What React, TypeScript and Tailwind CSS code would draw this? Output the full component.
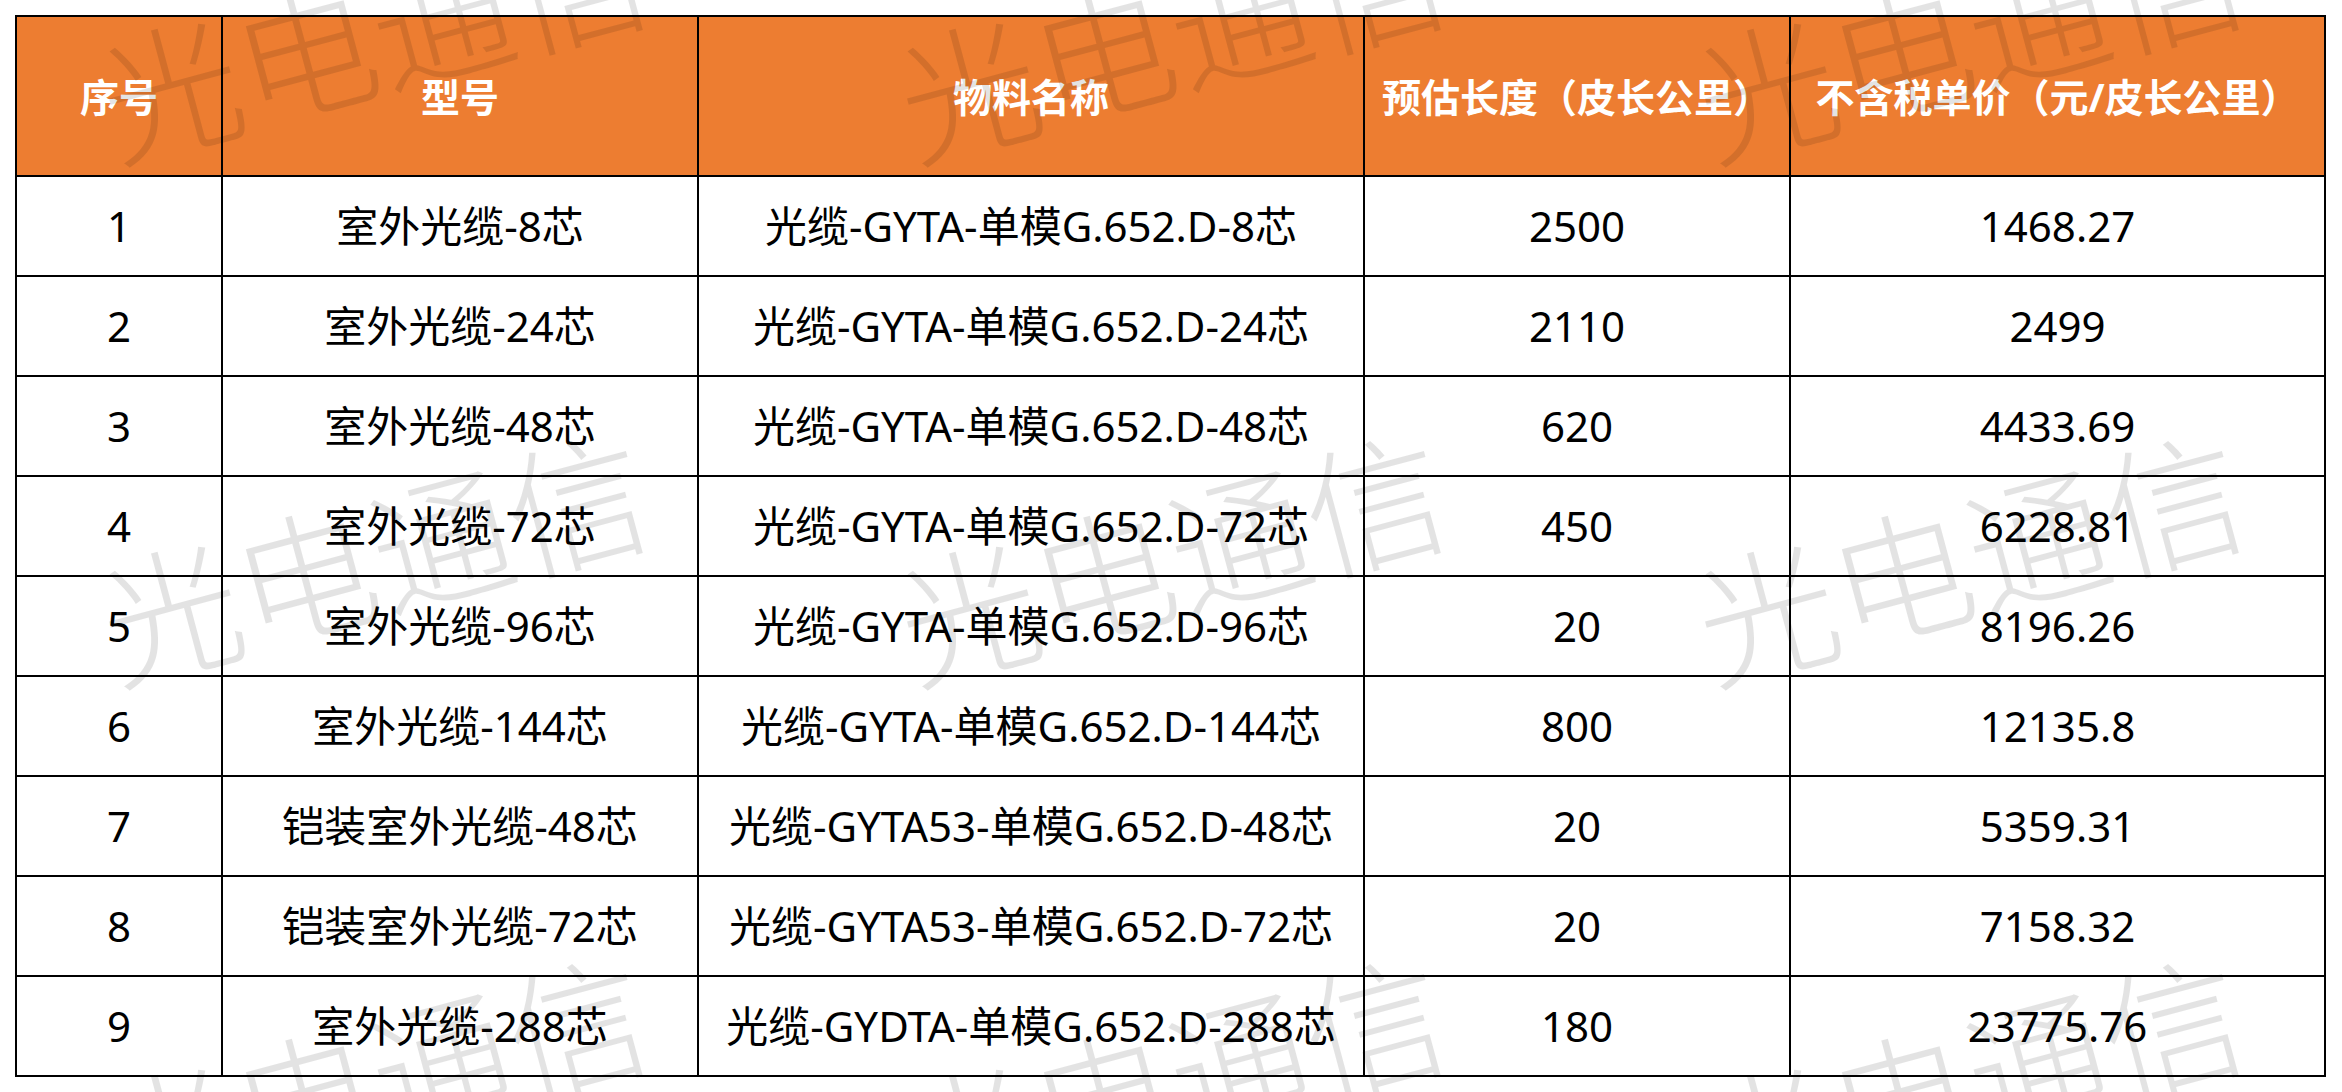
import React from "react";

const rows: [string, string, string, string, string][] = [
  ["1", "室外光缆-8芯", "光缆-GYTA-单模G.652.D-8芯", "2500", "1468.27"],
  ["2", "室外光缆-24芯", "光缆-GYTA-单模G.652.D-24芯", "2110", "2499"],
  ["3", "室外光缆-48芯", "光缆-GYTA-单模G.652.D-48芯", "620", "4433.69"],
  ["4", "室外光缆-72芯", "光缆-GYTA-单模G.652.D-72芯", "450", "6228.81"],
  ["5", "室外光缆-96芯", "光缆-GYTA-单模G.652.D-96芯", "20", "8196.26"],
  ["6", "室外光缆-144芯", "光缆-GYTA-单模G.652.D-144芯", "800", "12135.8"],
  ["7", "铠装室外光缆-48芯", "光缆-GYTA53-单模G.652.D-48芯", "20", "5359.31"],
  ["8", "铠装室外光缆-72芯", "光缆-GYTA53-单模G.652.D-72芯", "20", "7158.32"],
  ["9", "室外光缆-288芯", "光缆-GYDTA-单模G.652.D-288芯", "180", "23775.76"],
];

const headers = ["序号", "型号", "物料名称", "预估长度（皮长公里）", "不含税单价（元/皮长公里）"];

const marks: { x: number; y: number }[] = [];
for (const y of [29, 552, 1075]) {
  for (const x of [372, 1170, 1968]) {
    marks.push({ x, y });
  }
}

export default function App() {
  return (
    <div className="relative w-[2342px] h-[1092px] overflow-hidden bg-white font-['Noto_Sans','Noto_Sans_CJK_SC',sans-serif]">
      <div className="p-[15px]">
        <div className="grid w-fit grid-cols-[204px_474px_664px_424px_533px] grid-rows-[158px_repeat(9,98px)] gap-[2px] bg-black p-[2px]">
          {headers.map((h) => (
            <div
              key={h}
              className="flex items-center justify-center bg-[#ED7D31] text-[39px] font-bold leading-none text-white whitespace-nowrap"
            >
              {h}
            </div>
          ))}
          {rows.map((r) =>
            r.map((c, i) => (
              <div
                key={r[0] + "-" + i}
                className="flex items-center justify-center bg-white text-[42px] leading-none text-black whitespace-nowrap"
              >
                {c}
              </div>
            ))
          )}
        </div>
      </div>
      {marks.map((m, i) => (
        <div
          key={i}
          className="pointer-events-none absolute -translate-x-1/2 -translate-y-1/2 rotate-[-15deg] whitespace-nowrap font-['Noto_Sans_CJK_SC',sans-serif] text-[140px] font-light leading-none text-black/[0.11]"
          style={{ left: m.x, top: m.y }}
        >
          光电通信
        </div>
      ))}
    </div>
  );
}
